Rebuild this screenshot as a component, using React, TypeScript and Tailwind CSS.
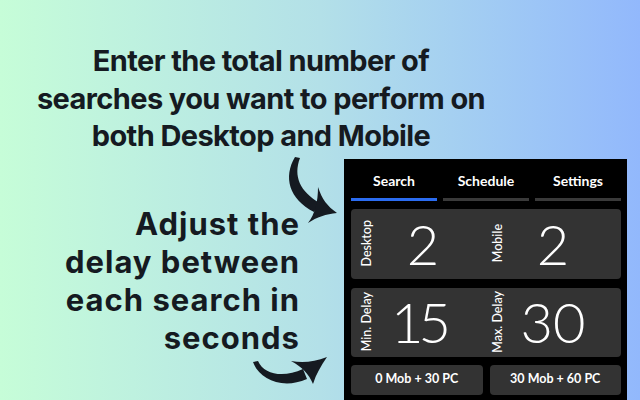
import React from "react";

const tabs = ["Search", "Schedule", "Settings"];

function Arrows() {
  return (
    <svg
      className="pointer-events-none absolute inset-0"
      width="640"
      height="400"
      viewBox="0 0 640 400"
    >
      {/* top arrow */}
      <path
        d="M295,157 C283,177 289,199 314,212 L320,203 C300,192 293,176 300,158 Z"
        fill="#151a21"
      />
      <path d="M318,187 C322,199 327,206 337,213 C326,214 317,217 308,223 C315,214 318,202 318,187 Z" fill="#151a21" />
      {/* bottom arrow */}
      <path
        d="M253,362 C259,379 282,390 307,379 L303,369 C284,378 264,375 258,361 Z"
        fill="#151a21"
      />
      <path d="M291,361 C303,363 314,362 327,357 C321,366 316,374 313,384 C309,374 302,367 291,361 Z" fill="#151a21" />
    </svg>
  );
}

function Stat({
  label,
  value,
  labelMl,
  numW,
  tight,
}: {
  label: string;
  value: string;
  labelMl: string;
  numW: string;
  tight?: boolean;
}) {
  return (
    <div className="flex items-center">
      <span
        className={`${labelMl} rotate-180 text-[12.5px] font-medium leading-[14px] text-white [writing-mode:vertical-rl]`}
      >
        {label}
      </span>
      <span
        className={`${numW} text-center text-[56px] font-light leading-none text-white ${tight ? "pr-[9px] tracking-[-5px]" : ""}`}
      >
        {value}
      </span>
    </div>
  );
}

export default function App() {
  return (
    <div
      className="relative h-[400px] w-[640px] overflow-hidden bg-gradient-to-r from-[#c6fdd8] via-[#b3e0e8] to-[#92b8fc] text-[#151a21]"
      style={{ fontFamily: "Inter, 'Noto Sans', sans-serif" }}
    >
      <h1 className="ml-[20px] w-[482px] whitespace-nowrap pt-[42px] text-center text-[29px] font-bold leading-[37.5px] tracking-[-0.6px]">
        Enter the total number of
        <br />
        searches you want to perform on
        <br />
        both Desktop and Mobile
      </h1>

      <div className="mt-[4px] flex">
        <p className="w-[300px] whitespace-nowrap pt-[46px] text-right text-[31px] font-bold leading-[38px] tracking-[1px]">
          Adjust the
          <br />
          delay between
          <br />
          each search in
          <br />
          seconds
        </p>

        <div
          className="ml-[44px] h-[260px] w-[283px] bg-black pl-[7px] pr-[6px]"
          style={{ fontFamily: "Lato, 'Noto Sans', sans-serif" }}
        >
          <div className="grid grid-cols-3 gap-[6px]">
            {tabs.map((t, i) => (
              <div key={t} className="flex flex-col">
                <span className="pt-[14px] text-center text-[14px] font-bold leading-[16px] text-white">
                  {t}
                </span>
                <div
                  className={`mt-[9px] h-[3px] ${i === 0 ? "bg-[#2b6cf0]" : "bg-[#3a3a3a]"}`}
                />
              </div>
            ))}
          </div>

          <div className="mt-[8px] grid h-[70px] grid-cols-2 rounded-[4px] bg-[#333333]">
            <Stat label="Desktop" value="2" labelMl="ml-[9px]" numW="w-[98px]" />
            <Stat label="Mobile" value="2" labelMl="ml-[5px]" numW="w-[96px]" />
          </div>

          <div className="mt-[9px] grid h-[69px] grid-cols-2 rounded-[4px] bg-[#333333]">
            <Stat label="Min. Delay" value="15" labelMl="ml-[9px]" numW="w-[98px]" tight />
            <Stat label="Max. Delay" value="30" labelMl="ml-[5px]" numW="w-[96px]" />
          </div>

          <div className="mt-[8px] grid grid-cols-2 gap-[7px]">
            <button className="h-[30px] rounded-[4px] bg-[#333333] text-[12.5px] font-bold text-white">
              0 Mob + 30 PC
            </button>
            <button className="h-[30px] rounded-[4px] bg-[#333333] text-[12.5px] font-bold text-white">
              30 Mob + 60 PC
            </button>
          </div>
        </div>
      </div>

      <Arrows />
    </div>
  );
}
